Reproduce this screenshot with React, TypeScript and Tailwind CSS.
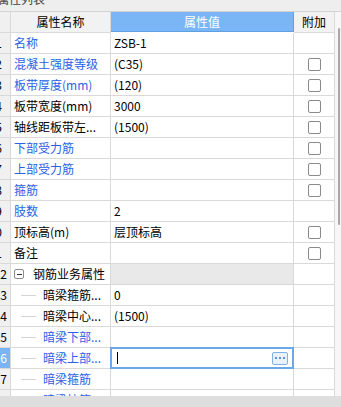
import React from 'react';

interface Row {
  no: number;
  name: string;
  value?: string;
  blue?: boolean;
  check?: boolean;
  child?: boolean;
  group?: boolean;
  editing?: boolean;
}

const rows: Row[] = [
  { no: 1, name: '名称', value: 'ZSB-1', blue: true },
  { no: 2, name: '混凝土强度等级', value: '(C35)', blue: true, check: true },
  { no: 3, name: '板带厚度(mm)', value: '(120)', blue: true, check: true },
  { no: 4, name: '板带宽度(mm)', value: '3000', check: true },
  { no: 5, name: '轴线距板带左...', value: '(1500)', check: true },
  { no: 6, name: '下部受力筋', blue: true, check: true },
  { no: 7, name: '上部受力筋', blue: true, check: true },
  { no: 8, name: '箍筋', blue: true, check: true },
  { no: 9, name: '肢数', value: '2', blue: true },
  { no: 10, name: '顶标高(m)', value: '层顶标高', check: true },
  { no: 11, name: '备注', check: true },
  { no: 12, name: '钢筋业务属性', group: true },
  { no: 13, name: '暗梁箍筋...', value: '0', child: true },
  { no: 14, name: '暗梁中心...', value: '(1500)', child: true },
  { no: 15, name: '暗梁下部...', blue: true, child: true },
  { no: 16, name: '暗梁上部...', blue: true, child: true, editing: true },
  { no: 17, name: '暗梁箍筋', blue: true, child: true },
  { no: 18, name: '暗梁拉筋', blue: true, child: true },
];

const cell = 'h-[21px] border-r border-b border-[#d9d9d9] overflow-hidden';

function RowNo({ row }: { row: Row }) {
  const pad = row.no >= 12 ? 'pr-[3px]' : 'pr-[8px]';
  return (
    <div className={`${cell} flex items-center justify-end ${pad} ${row.editing ? 'bg-[#7ab4f2] text-white' : 'bg-[#f0f0f0] text-black'}`}>
      <span className="whitespace-nowrap">{row.no}</span>
    </div>
  );
}

function NameCell({ row }: { row: Row }) {
  const color = row.blue ? 'text-[#2b5fe6]' : 'text-black';
  if (row.group) {
    return (
      <div className={`${cell} flex items-center pl-[3px] bg-white`}>
        <span className="w-[10px] h-[10px] border border-[#8c8c8c] rounded-[2px] flex items-center justify-center mr-[9px]">
          <span className="w-[5px] h-px bg-[#333]" />
        </span>
        <span className="text-black whitespace-nowrap">{row.name}</span>
      </div>
    );
  }
  if (row.child) {
    return (
      <div className={`${cell} flex items-center pl-[10px] bg-white`}>
        <span className="w-[15px] h-px bg-[#d4d4d4] mr-[7px]" />
        <span className={`${color} whitespace-nowrap`}>{row.name}</span>
      </div>
    );
  }
  return (
    <div className={`${cell} flex items-center pl-[3px] bg-white`}>
      <span className={`${color} whitespace-nowrap`}>{row.name}</span>
    </div>
  );
}

function ValueCell({ row }: { row: Row }) {
  if (row.editing) {
    return (
      <div className="h-[21px] border-b border-r border-[#d9d9d9] bg-white relative">
        <div className="absolute -left-px -top-px w-[184px] h-[22px] border-2 border-[#6aa8e8] flex items-center pl-[5px] pr-[4px]">
          <span className="w-px h-[12px] bg-black" />
          <span className="ml-auto w-[16px] h-[13px] border border-[#7fb0e6] bg-[#e9f1fb] rounded-[2px] flex items-center justify-center gap-[2px]">
            <span className="w-[2px] h-[2px] bg-[#5b92d4]" />
            <span className="w-[2px] h-[2px] bg-[#5b92d4]" />
            <span className="w-[2px] h-[2px] bg-[#5b92d4]" />
          </span>
        </div>
      </div>
    );
  }
  return (
    <div className={`${cell} flex items-center pl-[3px] ${row.group ? 'bg-[#e9e9e9]' : 'bg-white'}`}>
      <span className="text-black whitespace-nowrap">{row.value}</span>
    </div>
  );
}

function AttachCell({ row }: { row: Row }) {
  return (
    <div className={`${cell} flex items-center justify-center bg-white`}>
      {row.check && <span className="w-[13px] h-[13px] border border-[#8a8a8a] rounded-[2px] bg-white" />}
    </div>
  );
}

export default function App() {
  return (
    <div
      className="w-[341px] h-[407px] overflow-hidden bg-white flex flex-col text-[12px] leading-[12px]"
      style={{ fontFamily: '"Noto Sans CJK SC", "Noto Sans", sans-serif' }}
    >
      <div className="h-[11px] shrink-0 bg-[#eeeeee] overflow-hidden">
        <div className="mt-[-7px] ml-[-3px] text-[#444] whitespace-nowrap">属性列表</div>
      </div>

      <div className="flex-1 flex overflow-hidden border-t border-[#d4d4d4]">
        <div className="w-[335px] shrink-0">
          <div className="grid grid-cols-[11px_100px_183px_41px]">
            <div className={`${cell} h-[20px] bg-[#f0f0f0]`} />
            <div className={`${cell} h-[20px] bg-[#f2f2f2] flex items-center justify-center text-black`}>属性名称</div>
            <div className="h-[20px] border-r border-b border-[#5f9fe4] bg-[#7ab6f6] flex items-center justify-center text-white">属性值</div>
            <div className={`${cell} h-[20px] bg-[#f2f2f2] flex items-center justify-center text-black`}>附加</div>
            {rows.map((row) => (
              <React.Fragment key={row.no}>
                <RowNo row={row} />
                <NameCell row={row} />
                <ValueCell row={row} />
                <AttachCell row={row} />
              </React.Fragment>
            ))}
          </div>
        </div>
        <div className="flex-1 bg-[#f7f7f7] pt-[16px] flex justify-end pr-[1px]">
          <div className="w-[2px] h-[197px] bg-[#a8a8a8] rounded-full" />
        </div>
      </div>

      <div className="h-[11px] shrink-0 bg-[#dedede]" />
    </div>
  );
}
